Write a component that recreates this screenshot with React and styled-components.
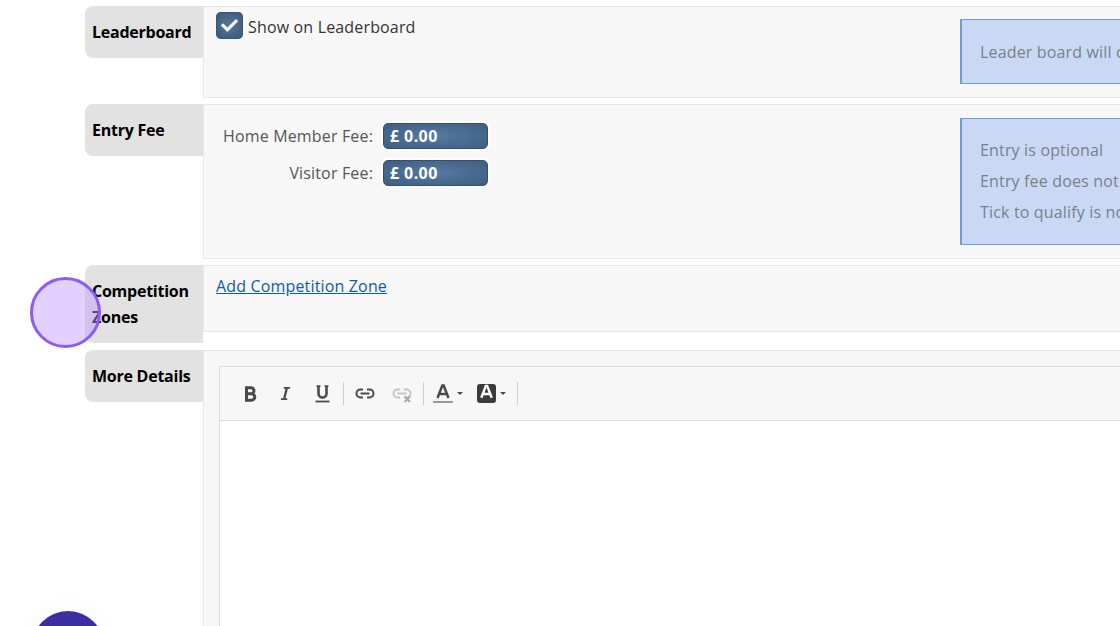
import React from "react";
import styled, { createGlobalStyle } from "styled-components";
import { FaItalic, FaCheck } from "react-icons/fa";

const GlobalStyle = createGlobalStyle`
  html, body {
    margin: 0;
    height: 100%;
    overflow: hidden;
    background: #fff;
    font-family: "Open Sans", "Liberation Sans", sans-serif;
  }
`;

const Page = styled.div`
  position: relative;
  width: 1120px;
  height: 626px;
  overflow: hidden;
  padding: 6px 0 0 85px;
  box-sizing: border-box;
`;

const Form = styled.div`
  width: 1400px;
  display: flex;
  flex-direction: column;
  gap: 6px;
`;

const Row = styled.div`
  display: flex;
  align-items: flex-start;
  margin-bottom: ${(p) => p.$after || 0}px;
`;

const RowLabel = styled.div`
  width: 118px;
  flex: none;
  box-sizing: border-box;
  padding: 13px 7px;
  background: #e2e2e2;
  border-radius: 8px 0 0 8px;
  color: #000;
  font-size: 16px;
  font-weight: 700;
  line-height: 26px;
  letter-spacing: -0.25px;
`;

const Panel = styled.div`
  flex: 1;
  box-sizing: border-box;
  height: ${(p) => p.$height}px;
  display: flex;
  justify-content: space-between;
  align-items: flex-start;
  padding: ${(p) => p.$top}px 0 0 ${(p) => p.$left}px;
  background: #f7f7f7;
  border: 1px solid #e7e7e7;
  color: #333;
  font-size: 16px;
  letter-spacing: 0.16px;
`;

const CheckRow = styled.label`
  display: flex;
  align-items: flex-start;
  gap: 5px;
  margin-top: -7px;
  line-height: 31px;
  color: #333;
`;

const CheckBox = styled.span`
  width: 27px;
  height: 27px;
  flex: none;
  display: flex;
  align-items: center;
  justify-content: center;
  border-radius: 5px;
  background: radial-gradient(circle, #557599 0%, #3a5676 100%);
  box-shadow: inset 0 0 2px #2c4562;
  color: #f1f1f1;
  font-size: 17px;
`;

const Hint = styled.div`
  width: 524px;
  flex: none;
  box-sizing: border-box;
  padding: ${(p) => (p.$single ? "17px 18px 15px" : "16px 18px")};
  background: #c9d9f5;
  border: 1px solid #6d9bdc;
  border-width: 1px 1px 1px 2px;
  color: #7b8088;
  font-size: 16px;
  line-height: 31px;
  white-space: nowrap;
`;

const FeeGrid = styled.div`
  display: grid;
  grid-template-columns: 150px 105px;
  column-gap: 10px;
  row-gap: 11px;
  align-items: center;
  margin-top: 5px;
`;

const FeeLabel = styled.span`
  color: #555;
  text-align: right;
  line-height: 26px;
  white-space: nowrap;
`;

const FeeValue = styled.div`
  height: 26px;
  box-sizing: border-box;
  padding-left: 6px;
  border-radius: 5px;
  border: 1px solid #33506f;
  box-shadow: 0 0 0 2px #fff;
  background: radial-gradient(ellipse at center, #557aa3 0%, #3f5d80 100%);
  color: #fff;
  font-size: 16px;
  font-weight: 700;
  line-height: 24px;
  letter-spacing: 0.4px;
`;

const AddLink = styled.a`
  margin-top: -7px;
  color: #0b5cad;
  line-height: 27px;
  text-decoration: underline;
`;

const Editor = styled.div`
  flex: 1;
  height: 400px;
  background: #fff;
  border: 1px solid #dcdcdc;
`;

const Toolbar = styled.div`
  height: 54px;
  box-sizing: border-box;
  display: flex;
  align-items: center;
  padding-left: 23px;
  background: #f7f7f7;
  border-bottom: 1px solid #dcdcdc;
`;

const ToolIcon = styled.span`
  width: ${(p) => p.$width}px;
  flex: none;
  display: flex;
  align-items: center;
  font-size: 15px;
  color: #4a4a4a;
`;

const Divider = styled.span`
  width: 1px;
  height: 23px;
  flex: none;
  margin-right: ${(p) => p.$after}px;
  background: #cfcfcf;
`;

const Caret = styled.span`
  width: 0;
  height: 0;
  margin-left: 4px;
  border-left: 3px solid transparent;
  border-right: 3px solid transparent;
  border-top: 3px solid #4a4a4a;
`;

const FillA = styled.span`
  width: 19px;
  height: 19px;
  display: flex;
  align-items: center;
  justify-content: center;
  border-radius: 3px;
  background: #3c3c3c;
`;

const Cursor = styled.div`
  position: absolute;
  left: 30px;
  top: 277px;
  width: 71px;
  height: 71px;
  box-sizing: border-box;
  border-radius: 50%;
  border: 3px solid #8b5cf6;
  background: rgba(190, 150, 255, 0.45);
`;

const HelpBubble = styled.div`
  position: absolute;
  left: 32px;
  top: 611px;
  width: 72px;
  height: 72px;
  border-radius: 50%;
  background: #3b2ea3;
  box-shadow: 0 0 24px rgba(0, 0, 0, 0.04);
`;

const BoldIcon = () => (
  <svg width="14" height="16" viewBox="0 0 14 16" fill="none" stroke="#4a4a4a" strokeWidth="3">
    <path d="M2 1.8H8a3 3 0 0 1 0 6H3.5M3.5 7.8H8.6a3.2 3.2 0 0 1 0 6.4H2M3.5 1.8V14.2" />
  </svg>
);

const UnderlineIcon = () => (
  <svg width="15" height="18" viewBox="0 0 15 18" fill="none" stroke="#4a4a4a">
    <path d="M3.5 1v7.5a4 4 0 0 0 8 0V1" strokeWidth="2.6" />
    <path d="M1.5 1h4M9.5 1h4" strokeWidth="1.4" />
    <path d="M0.5 16.5h14" strokeWidth="1.8" />
  </svg>
);

const ChainIcon = ({ muted }) => (
  <svg width="20" height="18" viewBox="0 0 20 18" fill="none" stroke={muted ? "#c6c6c6" : "#4a4a4a"} strokeWidth="2">
    <path d="M8 4.5H5.5a4 4 0 0 0 0 8H8M12 4.5h2.5a4 4 0 0 1 0 8H12M5.5 8.5h9" />
    {muted && <path d="M12.5 11.5l5.5 5.5M18 11.5l-5.5 5.5" stroke="#a8a8a8" />}
  </svg>
);

const LetterIcon = ({ color, bar }) => (
  <svg width="20" height="19" viewBox="0 0 20 19" fill="none" stroke={color} strokeWidth="2.5">
    <path d="M4.5 14L9.3 1.5h1.4L15.5 14M6.5 10h7" />
    {bar && <path d="M0 18h20" stroke="#9a9a9a" strokeWidth="2" />}
  </svg>
);

export default function App() {
  return (
    <Page>
      <GlobalStyle />
      <Form>
        <Row>
          <RowLabel>Leaderboard</RowLabel>
          <Panel $height={92} $top={12} $left={12}>
            <CheckRow>
              <CheckBox>
                <FaCheck />
              </CheckBox>
              Show on Leaderboard
            </CheckRow>
            <Hint $single>Leader board will c</Hint>
          </Panel>
        </Row>
        <Row>
          <RowLabel>Entry Fee</RowLabel>
          <Panel $height={155} $top={13} $left={19}>
            <FeeGrid>
              <FeeLabel>Home Member Fee:</FeeLabel>
              <FeeValue>£ 0.00</FeeValue>
              <FeeLabel>Visitor Fee:</FeeLabel>
              <FeeValue>£ 0.00</FeeValue>
            </FeeGrid>
            <Hint>
              <div>Entry is optional</div>
              <div>Entry fee does not</div>
              <div>Tick to qualify is no</div>
            </Hint>
          </Panel>
        </Row>
        <Row $after={1}>
          <RowLabel>
            Competition
            <br />
            Zones
          </RowLabel>
          <Panel $height={67} $top={14} $left={12}>
            <AddLink href="#">Add Competition Zone</AddLink>
          </Panel>
        </Row>
        <Row>
          <RowLabel>More Details</RowLabel>
          <Panel $height={300} $top={15} $left={15}>
            <Editor>
              <Toolbar>
                <ToolIcon $width={35}>
                  <BoldIcon />
                </ToolIcon>
                <ToolIcon $width={37}>
                  <FaItalic />
                </ToolIcon>
                <ToolIcon $width={28}>
                  <UnderlineIcon />
                </ToolIcon>
                <Divider $after={11} />
                <ToolIcon $width={37}>
                  <ChainIcon />
                </ToolIcon>
                <ToolIcon $width={31}>
                  <ChainIcon muted />
                </ToolIcon>
                <Divider $after={9} />
                <ToolIcon $width={44}>
                  <LetterIcon color="#4a4a4a" bar />
                  <Caret />
                </ToolIcon>
                <ToolIcon $width={40}>
                  <FillA>
                    <LetterIcon color="#fff" />
                  </FillA>
                  <Caret />
                </ToolIcon>
                <Divider $after={0} />
              </Toolbar>
            </Editor>
          </Panel>
        </Row>
      </Form>
      <Cursor />
      <HelpBubble />
    </Page>
  );
}
